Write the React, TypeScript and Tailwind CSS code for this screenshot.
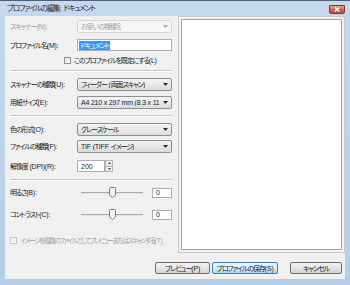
import React from "react";

const CJK = /([\u3000-\u30ff\u3400-\u9fff\uff00-\uffef]+)/;

function T({ t, tight }: { t: string; tight?: boolean }) {
  const parts = t.split(CJK).filter((p) => p.length > 0);
  return (
    <>
      {parts.map((p, i) =>
        CJK.test(p) ? (
          <span key={i} className={tight ? "tracking-[-1.75px]" : "tracking-[-1.1px]"}>
            {p}
          </span>
        ) : (
          <span key={i} className="tracking-[-0.2px]">
            {p}
          </span>
        )
      )}
    </>
  );
}

function Arrow({ color = "#2b2b2b" }: { color?: string }) {
  return (
    <svg width="5" height="3" viewBox="0 0 5 3" className="shrink-0">
      <path d="M0 0H5L2.5 3Z" fill={color} />
    </svg>
  );
}

function Combo({ text, disabled }: { text: string; disabled?: boolean }) {
  return (
    <div
      className={
        disabled
          ? "flex h-[13px] w-[95px] items-center justify-between rounded-[2px] border border-[#d3d6d9] bg-[#f6f6f6] pl-[3px] pr-[3px] text-[#a5a5a5]"
          : "flex h-[13px] w-[95px] items-center justify-between rounded-[2px] border border-[#8e8e8e] bg-gradient-to-b from-[#f4f4f4] to-[#dcdcdc] pl-[3px] pr-[3px] text-[#1c1c1c]"
      }
    >
      <span className="overflow-hidden whitespace-nowrap leading-none">
        <T t={text} />
      </span>
      <Arrow color={disabled ? "#a8a8a8" : "#2b2b2b"} />
    </div>
  );
}

function Check({ disabled }: { disabled?: boolean }) {
  return (
    <div
      className={
        disabled
          ? "h-[7px] w-[7px] shrink-0 border border-[#c4c4c4] bg-[#f4f4f4]"
          : "h-[7px] w-[7px] shrink-0 border border-[#8f8f8f] bg-gradient-to-br from-[#dcdcdc] to-[#ffffff]"
      }
    />
  );
}

function Slider() {
  return (
    <svg width="66" height="11" viewBox="0 0 66 11" className="shrink-0">
      <rect x="4" y="5" width="62" height="1" fill="#a8a8a8" />
      <rect x="4" y="6" width="62" height="1" fill="#e6e6e6" />
      <path
        d="M33.5 0.5H37.5Q38.5 0.5 38.5 1.5V8L35.5 10.5L32.5 8V1.5Q32.5 0.5 33.5 0.5Z"
        fill="#f1f1f1"
        stroke="#7c7c7c"
        strokeWidth="1"
      />
    </svg>
  );
}

function Sep() {
  return <div className="h-[2px] w-[162px] border-t border-[#c9c9c9] border-b border-b-white" />;
}

function Label({ t, gray }: { t: string; gray?: boolean }) {
  return (
    <span
      className={
        gray
          ? "w-[67px] shrink-0 whitespace-nowrap leading-none text-[#a3a3a3]"
          : "w-[67px] shrink-0 whitespace-nowrap leading-none"
      }
    >
      <T t={t} />
    </span>
  );
}

function Btn({ text, w, def }: { text: string; w: string; def?: boolean }) {
  return (
    <div
      className={
        (def
          ? "border-[#3c7fb1] bg-gradient-to-b from-[#eaf6fd] via-[#d9f0fc] to-[#a7d9f5] "
          : "border-[#707070] bg-gradient-to-b from-[#f2f2f2] via-[#e6e6e6] to-[#d2d2d2] ") +
        w +
        " flex h-[12px] items-center justify-center rounded-[2px] border text-[#1c1c1c]"
      }
    >
      <span className="whitespace-nowrap leading-none">
        <T t={text} />
      </span>
    </div>
  );
}

export default function App() {
  return (
    <div className="flex h-[285px] w-[350px] flex-col overflow-hidden border-t border-[#4d5f73] bg-gradient-to-b from-[#c4d9ee] to-[#b5cde6] font-['Liberation_Sans','Noto_Sans_CJK_JP',sans-serif] text-[7px] [font-feature-settings:'palt']">
      {/* title bar */}
      <div className="flex h-[15px] shrink-0 items-start justify-between pl-[7px] pr-[5px]">
        <span className="mt-[4px] whitespace-nowrap text-[7.5px] leading-none text-[#2a2a2a]">
          <T t="プロファイルの編集: ドキュメント" />
        </span>
        <div className="mt-[4px] flex h-[9px] w-[16px] items-center justify-center rounded-b-[2px] border border-[#7a3a30] bg-gradient-to-b from-[#e6a394] via-[#cf6753] to-[#bf4a36]">
          <svg width="6" height="5" viewBox="0 0 6 5">
            <path d="M0.8 0.6L5.2 4.4M5.2 0.6L0.8 4.4" stroke="#ffffff" strokeWidth="1.3" />
          </svg>
        </div>
      </div>

      {/* body */}
      <div className="flex flex-1 px-[5px] pb-[6px]">
        <div className="flex h-[263px] w-[340px] flex-col bg-[#f0f0f0]">
          <div className="flex h-[237px]">
            {/* left column */}
            <div className="flex w-[173px] flex-col pl-[5px] text-[#1c1c1c]">
              <div className="mt-[4px] flex h-[13px] items-center">
                <Label t="スキャナー(N):" gray />
                <Combo text="お使いの機種名" disabled />
              </div>
              <div className="mt-[6px] flex h-[12px] items-center">
                <Label t="プロファイル名(M):" />
                <div className="flex h-[12px] w-[95px] items-center border border-[#abadb3] bg-white pl-[1px]">
                  <span className="bg-[#3399ff] px-[1px] py-[1px] leading-none text-white">
                    <T t="ドキュメント" />
                  </span>
                </div>
              </div>
              <div className="mt-[5px] flex h-[8px] items-center gap-[3px] pl-[54px]">
                <Check />
                <span className="whitespace-nowrap leading-none">
                  <T t="このプロファイルを既定にする(L)" />
                </span>
              </div>
              <div className="mt-[6px]">
                <Sep />
              </div>
              <div className="mt-[6px] flex h-[13px] items-center">
                <Label t="スキャナーの種類(U):" />
                <Combo text="フィーダー (両面スキャン)" />
              </div>
              <div className="mt-[5px] flex h-[13px] items-center">
                <Label t="用紙サイズ(E):" />
                <Combo text="A4 210 x 297 mm (8.3 x 11" />
              </div>
              <div className="mt-[6px]">
                <Sep />
              </div>
              <div className="mt-[6px] flex h-[13px] items-center">
                <Label t="色の形式(O):" />
                <Combo text="グレースケール" />
              </div>
              <div className="mt-[4px] flex h-[13px] items-center">
                <Label t="ファイルの種類(F):" />
                <Combo text="TIF (TIFF イメージ)" />
              </div>
              <div className="mt-[7px] flex h-[12px] items-center">
                <Label t="解像度 (DPI)(R):" />
                <div className="flex h-[12px] w-[28px] items-center border border-[#abadb3] bg-white pl-[3px]">
                  <span className="leading-none">200</span>
                </div>
                <div className="flex h-[12px] w-[8px] flex-col">
                  <div className="flex flex-1 items-center justify-center border border-[#b5b5b5] bg-gradient-to-b from-[#f6f6f6] to-[#e3e3e3]">
                    <svg width="3" height="2" viewBox="0 0 3 2"><path d="M0 2H3L1.5 0Z" fill="#4a4a4a" /></svg>
                  </div>
                  <div className="flex flex-1 items-center justify-center border border-t-0 border-[#b5b5b5] bg-gradient-to-b from-[#f6f6f6] to-[#e3e3e3]">
                    <svg width="3" height="2" viewBox="0 0 3 2"><path d="M0 0H3L1.5 2Z" fill="#4a4a4a" /></svg>
                  </div>
                </div>
              </div>
              <div className="mt-[7px]">
                <Sep />
              </div>
              <div className="mt-[6px] flex h-[11px] items-center">
                <Label t="明るさ(B):" />
                <Slider />
                <div className="ml-[9px] flex h-[10px] w-[20px] items-center border border-[#abadb3] bg-white pl-[3px]">
                  <span className="leading-none">0</span>
                </div>
              </div>
              <div className="mt-[11px] flex h-[11px] items-center">
                <Label t="コントラスト(C):" />
                <Slider />
                <div className="ml-[9px] flex h-[10px] w-[20px] items-center border border-[#abadb3] bg-white pl-[3px]">
                  <span className="leading-none">0</span>
                </div>
              </div>
              <div className="mt-[16px] flex h-[8px] items-center gap-[3px]">
                <Check disabled />
                <span className="whitespace-nowrap leading-none text-[#a3a3a3]">
                  <T t="イメージを複数のファイルとしてプレビューまたはスキャンする(T)" tight />
                </span>
              </div>
            </div>
            {/* preview pane */}
            <div className="h-[237px] w-[167px] border border-[#cacaca] bg-[#f4f4f4] p-[2px]">
              <div className="h-full w-full border border-[#a3a3a3] bg-white" />
            </div>
          </div>
          {/* buttons */}
          <div className="mt-[9px] flex justify-end pr-[3px]">
            <Btn text="プレビュー(P)" w="w-[55px]" />
            <div className="w-[2px]" />
            <Btn text="プロファイルの保存(S)" w="w-[66px]" def />
            <div className="w-[12px]" />
            <Btn text="キャンセル" w="w-[52px]" />
          </div>
        </div>
      </div>
    </div>
  );
}
